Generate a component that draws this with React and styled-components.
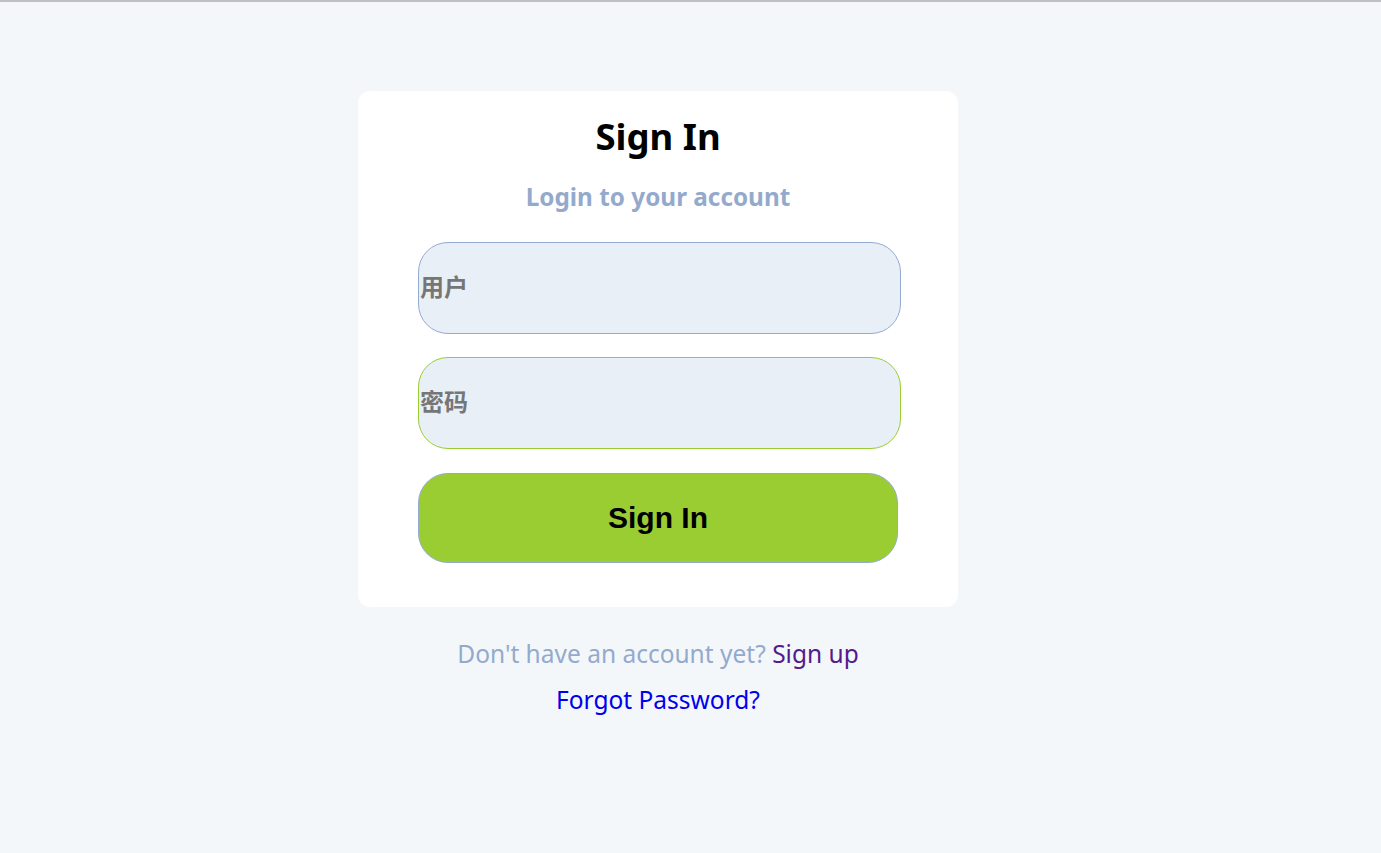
import React from 'react'
import styled, { createGlobalStyle } from 'styled-components'

const Global = createGlobalStyle`
  html, body {
    margin: 0;
    padding: 0;
    background: #f3f7fa;
  }
  body {
    font-family: "Noto Sans", "Noto Sans CJK SC", sans-serif;
  }
`

const Page = styled.div`
  min-height: 853px;
  box-sizing: border-box;
  border-top: 2px solid #c0c0c0;
  display: flex;
  flex-direction: column;
  align-items: center;
  padding-top: 89px;
  padding-right: 65px;
`

const Card = styled.div`
  width: 600px;
  box-sizing: border-box;
  background: #fff;
  border-radius: 12px;
  padding: 20px 60px 44px;
  display: flex;
  flex-direction: column;
  align-items: center;
`

const Title = styled.h1`
  margin: 0;
  font-size: 36.5px;
  line-height: 50px;
  font-weight: 700;
  color: #000;
`

const Subtitle = styled.p`
  margin: 20px 0 29px;
  font-size: 24.3px;
  line-height: 32px;
  font-weight: 700;
  color: #94aacd;
`

const Input = styled.input`
  width: 483px;
  height: 92px;
  box-sizing: border-box;
  margin-left: 3px;
  padding: 0 0 0 1px;
  border: 1px solid ${p => (p.$active ? '#9acd32' : '#94abd0')};
  border-radius: 30px;
  background: #e9eff7;
  font-family: "Liberation Sans", "Noto Sans CJK SC", sans-serif;
  font-size: 24px;
  font-weight: 700;
  outline: none;
  & + & {
    margin-top: 23px;
  }
  &::placeholder {
    color: #767676;
  }
`

const Button = styled.button`
  width: 480px;
  height: 90px;
  margin-top: 24px;
  border: 1px solid #94abd0;
  border-radius: 30px;
  background: #9acd32;
  color: #000;
  font-family: "Liberation Sans", Arial, sans-serif;
  font-size: 30px;
  font-weight: 700;
  cursor: pointer;
`

const Footer = styled.div`
  margin-top: 30px;
  display: flex;
  flex-direction: column;
  align-items: center;
  gap: 12px;
  font-size: 24.5px;
  line-height: 34px;
`

const Muted = styled.span`
  color: #94aacd;
`

const Link = styled.a`
  color: ${p => (p.$visited ? '#551a8b' : '#0000ee')};
  text-decoration: none;
`

const App = () => {
  return (
    <Page>
      <Global />
      <Card>
        <Title>Sign In</Title>
        <Subtitle>Login to your account</Subtitle>
        <Input type="text" placeholder="用户" />
        <Input type="password" placeholder="密码" $active autoFocus />
        <Button type="button">Sign In</Button>
      </Card>
      <Footer>
        <div>
          <Muted>Don't have an account yet? </Muted>
          <Link href="#" $visited>Sign up</Link>
        </div>
        <Link href="#">Forgot Password?</Link>
      </Footer>
    </Page>
  )
}

export default App
